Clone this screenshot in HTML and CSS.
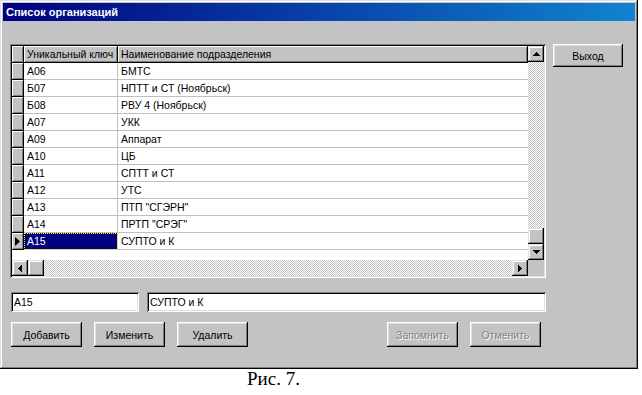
FILE: index.html
```html
<!DOCTYPE html>
<html lang="ru">
<head>
<meta charset="UTF-8">
<title>Список организаций</title>
<link rel="stylesheet" href="styles.css">
</head>
<body>

<div class="window">
    <div class="titlebar">Список организаций</div>
    <div class="client">
        <div class="top">
            <div class="grid">
                <div class="grid-main">
                    <div class="table">
                        <div class="row head">
                            <div class="ind"></div>
                            <div class="c1">Уникальный ключ</div>
                            <div class="c2">Наименование подразделения</div>
                        </div>
                        <div class="row"><div class="ind"></div><div class="c1">А06</div><div class="c2">БМТС</div></div>
                        <div class="row"><div class="ind"></div><div class="c1">Б07</div><div class="c2">НПТТ и СТ (Ноябрьск)</div></div>
                        <div class="row"><div class="ind"></div><div class="c1">Б08</div><div class="c2">РВУ 4 (Ноябрьск)</div></div>
                        <div class="row"><div class="ind"></div><div class="c1">А07</div><div class="c2">УКК</div></div>
                        <div class="row"><div class="ind"></div><div class="c1">А09</div><div class="c2">Аппарат</div></div>
                        <div class="row"><div class="ind"></div><div class="c1">А10</div><div class="c2">ЦБ</div></div>
                        <div class="row"><div class="ind"></div><div class="c1">А11</div><div class="c2">СПТТ и СТ</div></div>
                        <div class="row"><div class="ind"></div><div class="c1">А12</div><div class="c2">УТС</div></div>
                        <div class="row"><div class="ind"></div><div class="c1">А13</div><div class="c2">ПТП "СГЭРН"</div></div>
                        <div class="row"><div class="ind"></div><div class="c1">А14</div><div class="c2">ПРТП "СРЭГ"</div></div>
                        <div class="row current">
                            <div class="ind">
                                <svg width="5" height="9" viewBox="0 0 5 9"><polygon points="0,0 5,4.5 0,9" fill="#000"/></svg>
                            </div>
                            <div class="c1 selected">А15</div>
                            <div class="c2">СУПТО и К</div>
                        </div>
                    </div>
                    <div class="vscroll">
                        <div class="sbtn">
                            <svg width="7" height="4" viewBox="0 0 7 4" shape-rendering="crispEdges"><polygon points="3.5,0 7,4 0,4" fill="#000"/></svg>
                        </div>
                        <div class="track"></div>
                        <div class="sbtn"></div>
                        <div class="sbtn">
                            <svg width="7" height="4" viewBox="0 0 7 4" shape-rendering="crispEdges"><polygon points="0,0 7,0 3.5,4" fill="#000"/></svg>
                        </div>
                    </div>
                </div>
                <div class="hscroll">
                    <div class="sbtn">
                        <svg width="4" height="7" viewBox="0 0 4 7" shape-rendering="crispEdges"><polygon points="4,0 4,7 0,3.5" fill="#000"/></svg>
                    </div>
                    <div class="sbtn"></div>
                    <div class="track"></div>
                    <div class="sbtn">
                        <svg width="4" height="7" viewBox="0 0 4 7" shape-rendering="crispEdges"><polygon points="0,0 4,3.5 0,7" fill="#000"/></svg>
                    </div>
                    <div class="corner"></div>
                </div>
            </div>
            <button class="btn exit">Выход</button>
        </div>

        <div class="edits">
            <div class="edit key">А15</div>
            <div class="edit name">СУПТО и К</div>
        </div>

        <div class="buttons">
            <button class="btn">Добавить</button>
            <button class="btn">Изменить</button>
            <button class="btn">Удалить</button>
            <div class="spacer"></div>
            <button class="btn" disabled>Запомнить</button>
            <button class="btn" disabled>Отменить</button>
        </div>
    </div>
</div>

<p class="caption">Рис. 7.</p>

</body>
</html>
```

FILE: styles.css
```css
body {
    margin: 0;
    background-color: #fff;
    font-family: "Liberation Sans", Arial, sans-serif;
    font-size: 10.5px;
    color: #000;
}

.window {
    width: 638px;
    height: 369px;
    box-sizing: border-box;
    padding: 3px;
    background-color: #c3c3c3;
    box-shadow: inset -1px -1px #000, inset 1px 1px #dfdfdf, inset -2px -2px #808080, inset 2px 2px #fff;
}

.titlebar {
    height: 18px;
    line-height: 18px;
    padding-left: 3px;
    background: linear-gradient(to right, #000080, #1084d0);
    color: #fff;
    font-weight: bold;
    font-size: 11px;
}

.client {
    padding: 23px 0 0 7px;
}

.top {
    display: flex;
    align-items: flex-start;
}

/* data grid */
.grid {
    width: 536px;
    height: 234px;
    box-sizing: border-box;
    padding: 2px;
    display: flex;
    flex-direction: column;
    background-color: #fff;
    box-shadow: inset 1px 1px #808080, inset -1px -1px #fff, inset 2px 2px #000, inset -2px -2px #dfdfdf;
}

.grid-main {
    display: flex;
    height: 214px;
}

.table {
    width: 516px;
    overflow: hidden;
}

.row {
    display: flex;
    height: 17px;
    line-height: 16px;
}

.row > div {
    box-sizing: border-box;
    white-space: nowrap;
    overflow: hidden;
}

.ind {
    width: 12px;
    background-color: #c3c3c3;
    border-right: 1px solid #000;
    border-bottom: 1px solid #000;
    box-shadow: inset 1px 1px #fff, inset -1px -1px #808080;
    display: flex;
    align-items: center;
    justify-content: center;
}

.c1 {
    width: 94px;
    padding-left: 3px;
    border-right: 1px solid #c0c0c0;
    border-bottom: 1px solid #c0c0c0;
}

.c2 {
    flex: 1;
    padding-left: 3px;
    border-bottom: 1px solid #c0c0c0;
}

.head > div {
    background-color: #c3c3c3;
    border-right: 1px solid #000;
    border-bottom: 1px solid #000;
    box-shadow: inset 1px 1px #fff, inset -1px -1px #808080;
}

.selected {
    background-color: #000080;
    color: #fff;
    outline: 1px dotted #ffff00;
    outline-offset: -1px;
}

/* scroll bars */
.vscroll {
    width: 16px;
    display: flex;
    flex-direction: column;
}

.hscroll {
    height: 16px;
    display: flex;
}

.sbtn {
    width: 16px;
    height: 16px;
    flex: none;
    box-sizing: border-box;
    background-color: #c3c3c3;
    box-shadow: inset -1px -1px #000, inset 1px 1px #dfdfdf, inset -2px -2px #808080, inset 2px 2px #fff;
    display: flex;
    align-items: center;
    justify-content: center;
}

.track {
    flex: 1;
    background: repeating-conic-gradient(#fff 0 25%, #c3c3c3 0 50%) 0 0 / 2px 2px;
}

.corner {
    width: 16px;
    background-color: #c3c3c3;
}

/* buttons */
.btn {
    width: 71px;
    height: 25px;
    padding: 0;
    border: none;
    background-color: #c3c3c3;
    font-family: "Liberation Sans", Arial, sans-serif;
    font-size: 10.5px;
    color: #000;
    box-shadow: inset -1px -1px #000, inset 1px 1px #fff, inset -2px -2px #808080, inset 2px 2px #dfdfdf;
}

.btn:disabled {
    color: #808080;
    text-shadow: 1px 1px 0 #fff;
}

.exit {
    width: 70px;
    height: 23px;
    margin-left: 7px;
}

/* edit fields */
.edits {
    display: flex;
    gap: 8px;
    margin: 14px 0 0 1px;
}

.edit {
    height: 20px;
    line-height: 20px;
    box-sizing: border-box;
    padding-left: 3px;
    background-color: #fff;
    box-shadow: inset 1px 1px #808080, inset -1px -1px #fff, inset 2px 2px #000, inset -2px -2px #dfdfdf;
}

.key {
    width: 128px;
}

.name {
    width: 399px;
}

.buttons {
    display: flex;
    gap: 12px;
    width: 530px;
    margin: 10px 0 0 1px;
}

.spacer {
    flex: 1;
}

.caption {
    margin: 0;
    padding-left: 247px;
    font-family: "Liberation Serif", "Times New Roman", serif;
    font-size: 19px;
    line-height: 19px;
}
```
